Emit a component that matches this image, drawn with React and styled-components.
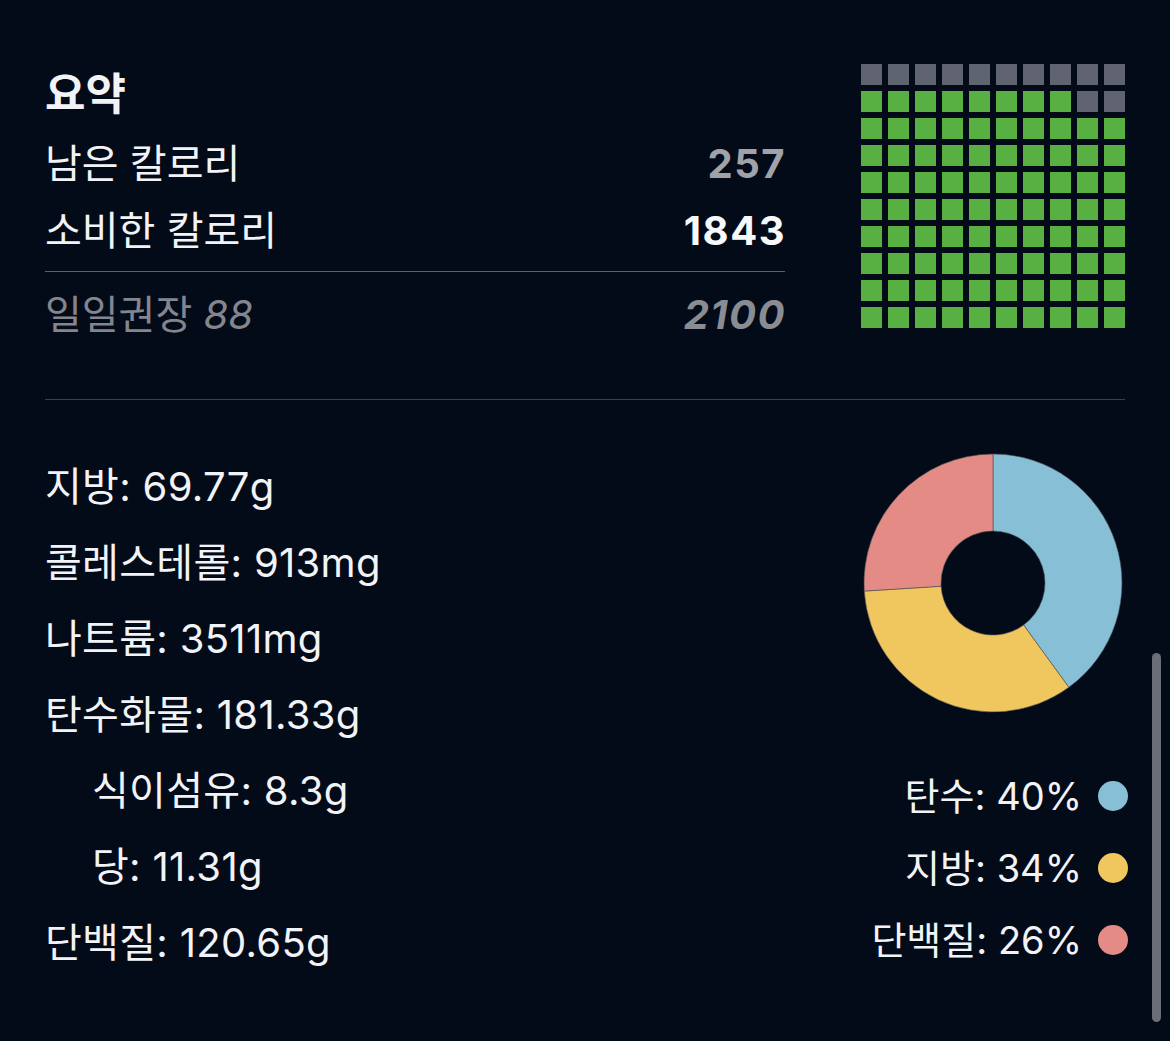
import React from 'react';
import styled, { createGlobalStyle } from 'styled-components';

const GlobalStyle = createGlobalStyle`
  html, body {
    margin: 0;
    padding: 0;
    background: #040b18;
  }
  body {
    font-family: "Inter", "Noto Sans CJK KR", sans-serif;
    color: #f2f3f6;
    -webkit-font-smoothing: antialiased;
  }
`;

const Page = styled.div`
  width: 1170px;
  min-height: 1041px;
  box-sizing: border-box;
  padding: 64px 45px 0;
`;

const Top = styled.section`
  display: grid;
  grid-template-columns: 1fr 264px;
  column-gap: 76px;
`;

const Summary = styled.div`
  display: flex;
  flex-direction: column;
`;

const Title = styled.h2`
  margin: 0 0 6px;
  font-size: 44px;
  line-height: 60px;
  font-weight: 600;
`;

const Row = styled.div`
  display: flex;
  justify-content: space-between;
  align-items: baseline;
  font-size: 40px;
  line-height: 67px;
  color: ${(p) => (p.$muted ? '#83868e' : '#f2f3f6')};
`;

const Value = styled.span`
  font-weight: 700;
  letter-spacing: 1.5px;
  margin-right: -1px;
  color: ${(p) => p.$color || '#f7f8fa'};
  font-style: ${(p) => (p.$italic ? 'italic' : 'normal')};
`;

const Em = styled.span`
  font-style: italic;
`;

const Rule = styled.hr`
  margin: ${(p) => p.$margin || '0'};
  border: none;
  height: 1px;
  background: ${(p) => p.$color || '#5b606b'};
`;

const Waffle = styled.div`
  display: grid;
  grid-template-columns: repeat(10, 21px);
  grid-auto-rows: 21px;
  gap: 6px;
  align-self: start;
`;

const Cell = styled.div`
  background: ${(p) => (p.$filled ? '#58b043' : '#5f6470')};
`;

const Bottom = styled.section`
  display: grid;
  grid-template-columns: 1fr 264px;
  column-gap: 76px;
  padding-top: 49px;
`;

const Nutrients = styled.ul`
  list-style: none;
  margin: 0;
  padding: 0;
`;

const Nutrient = styled.li`
  font-size: 40px;
  line-height: 76px;
  letter-spacing: 0.3px;
  padding-left: ${(p) => (p.$sub ? '47px' : '0')};
`;

const ChartColumn = styled.div`
  display: flex;
  flex-direction: column;
  align-items: center;
  padding-top: 2px;
`;

const Legend = styled.ul`
  list-style: none;
  margin: 45px -3px 0 0;
  padding: 0;
  align-self: stretch;
  display: flex;
  flex-direction: column;
  align-items: flex-end;
`;

const LegendItem = styled.li`
  display: flex;
  align-items: center;
  gap: 16px;
  font-size: 38px;
  line-height: 72px;
`;

const Dot = styled.span`
  width: 30px;
  height: 30px;
  border-radius: 50%;
  background: ${(p) => p.$color};
  flex: none;
`;

const Scrollbar = styled.div`
  position: fixed;
  left: 1152px;
  top: 653px;
  width: 9px;
  height: 369px;
  border-radius: 5px;
  background: #6b6e76;
`;

const macros = [
  { label: '탄수', pct: 40, color: '#87c0d6' },
  { label: '지방', pct: 34, color: '#f0c65e' },
  { label: '단백질', pct: 26, color: '#e38b84' },
];

const nutrients = [
  { label: '지방', value: '69.77g' },
  { label: '콜레스테롤', value: '913mg' },
  { label: '나트륨', value: '3511mg' },
  { label: '탄수화물', value: '181.33g' },
  { label: '식이섬유', value: '8.3g', sub: true },
  { label: '당', value: '11.31g', sub: true },
  { label: '단백질', value: '120.65g' },
];

function point(cx, cy, r, deg) {
  const a = ((deg - 90) * Math.PI) / 180;
  return [cx + r * Math.cos(a), cy + r * Math.sin(a)];
}

function arc(cx, cy, R, r, from, to) {
  const large = to - from > 180 ? 1 : 0;
  const [x1, y1] = point(cx, cy, R, from);
  const [x2, y2] = point(cx, cy, R, to);
  const [x3, y3] = point(cx, cy, r, to);
  const [x4, y4] = point(cx, cy, r, from);
  return `M${x1} ${y1} A${R} ${R} 0 ${large} 1 ${x2} ${y2} L${x3} ${y3} A${r} ${r} 0 ${large} 0 ${x4} ${y4} Z`;
}

const Donut = () => {
  let start = 0;
  return (
    <svg width="264" height="264" viewBox="0 0 264 264">
      {macros.map((m) => {
        const end = start + (m.pct / 100) * 360;
        const d = arc(132, 132, 129, 52, start, end);
        start = end;
        return <path key={m.label} d={d} fill={m.color} stroke="#4b4f55" strokeWidth="0.6" />;
      })}
    </svg>
  );
};

// fills from the bottom row upward, left to right
const isFilled = (i, count) => {
  const row = Math.floor(i / 10);
  const col = i % 10;
  return (9 - row) * 10 + col < count;
};

const App = () => {
  const eaten = 88;
  return (
    <Page>
      <GlobalStyle />
      <Top>
        <Summary>
          <Title>요약</Title>
          <Row>
            <span>남은 칼로리</span>
            <Value $color="#a0a2a9">257</Value>
          </Row>
          <Row>
            <span>소비한 칼로리</span>
            <Value>1843</Value>
          </Row>
          <Rule $margin="7px 0 9px" />
          <Row $muted>
            <span>일일권장 <Em>88</Em></span>
            <Value $color="#8a8c93" $italic>2100</Value>
          </Row>
        </Summary>
        <Waffle>
          {Array.from({ length: 100 }, (_, i) => (
            <Cell key={i} $filled={isFilled(i, eaten)} />
          ))}
        </Waffle>
      </Top>
      <Rule $margin="51px 0 0" $color="#3a3f4a" />
      <Bottom>
        <Nutrients>
          {nutrients.map((n) => (
            <Nutrient key={n.label} $sub={n.sub}>{n.label}: {n.value}</Nutrient>
          ))}
        </Nutrients>
        <ChartColumn>
          <Donut />
          <Legend>
            {macros.map((m) => (
              <LegendItem key={m.label}>
                <span>{m.label}: {m.pct}%</span>
                <Dot $color={m.color} />
              </LegendItem>
            ))}
          </Legend>
        </ChartColumn>
      </Bottom>
      <Scrollbar />
    </Page>
  );
};

export default App;
